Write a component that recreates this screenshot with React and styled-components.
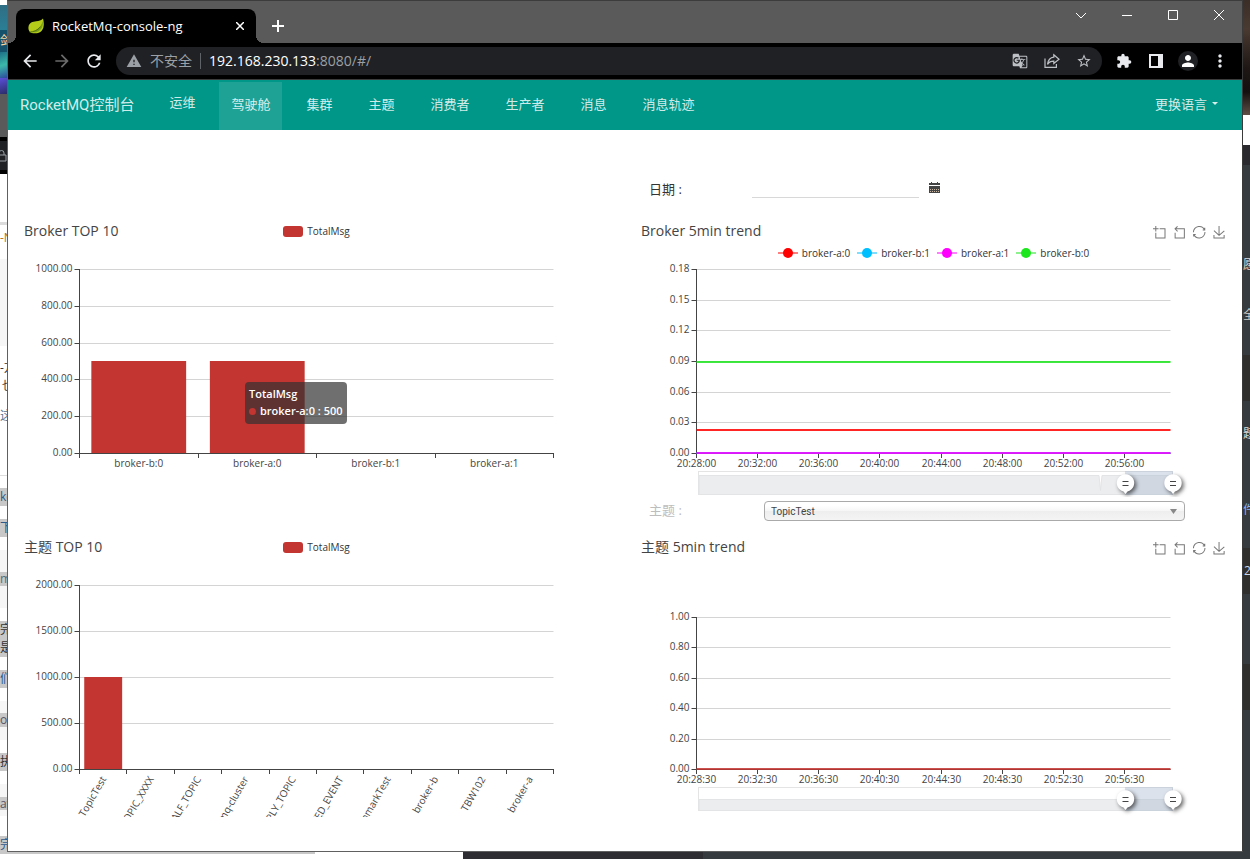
import React from 'react'
import styled, { createGlobalStyle } from 'styled-components'
import {
  MdArrowBack,
  MdArrowForward,
  MdRefresh,
  MdWarning,
  MdGTranslate,
  MdStarBorder,
  MdExtension,
  MdPerson,
  MdMoreVert,
} from 'react-icons/md'

const GlobalStyle = createGlobalStyle`
  * { box-sizing: border-box; }
  body {
    margin: 0;
    font-family: 'Open Sans', 'Noto Sans CJK SC', sans-serif;
    color: #333;
    background: #fff;
  }
  button, input, select { font-family: inherit; }
`

/* ---------- desktop ---------- */

const StDesktop = styled.div`
  display: grid;
  grid-template-columns: 7px minmax(0, 1fr) 7px;
  grid-template-rows: 1fr 7px;
  min-height: 100vh;
`
const StStrip = styled.div`
  display: flex;
  flex-direction: column;
  height: 0;
  min-height: 100%;
  overflow: hidden;
`
const StBand = styled.div`
  flex: 0 0 ${(p) => p.$h}px;
  display: flex;
  align-items: center;
  padding-left: ${(p) => p.$pad || 0}px;
  overflow: hidden;
  white-space: nowrap;
  font-size: 12px;
  line-height: 16px;
  color: ${(p) => p.$color || '#333'};
  background: ${(p) => p.$bg || '#fff'};
`
const StBottomStrip = styled.div`
  grid-column: 1 / -1;
  display: flex;
`
const StBottomPiece = styled.div`
  flex: ${(p) => p.$grow} 0 0;
  background: ${(p) => p.$bg};
  border-top: ${(p) => (p.$edge ? '2px solid #c8c8c8' : 'none')};
`
const StWindow = styled.div`
  display: flex;
  flex-direction: column;
  border: 1px solid #606060;
  border-top-color: #3c3c3c;
  border-right-color: #3a3a3a;
  background: #fff;
`

/* ---------- browser chrome ---------- */

const StTitleBar = styled.div`
  display: flex;
  align-items: flex-end;
  height: 42px;
  padding-left: 8px;
  background: #5a5a5a;
`
const StTab = styled.div`
  position: relative;
  display: flex;
  align-items: center;
  gap: 8px;
  width: 240px;
  height: 34px;
  padding: 0 8px 0 12px;
  border-radius: 8px 8px 0 0;
  background: #000;
  color: #fff;
  font-size: 13px;
  &::before,
  &::after {
    content: '';
    position: absolute;
    bottom: 0;
    width: 8px;
    height: 8px;
  }
  &::before {
    left: -8px;
    background: radial-gradient(circle at 0 0, transparent 8px, #000 8px);
  }
  &::after {
    right: -8px;
    background: radial-gradient(circle at 100% 0, transparent 8px, #000 8px);
  }
`
const StTabTitle = styled.span`
  flex: 1;
  white-space: nowrap;
`
const StIconButton = styled.button`
  display: flex;
  align-items: center;
  justify-content: center;
  flex: none;
  width: ${(p) => p.$size || 20}px;
  height: ${(p) => p.$size || 20}px;
  padding: 0;
  border: 0;
  border-radius: 50%;
  background: ${(p) => p.$bg || 'none'};
  color: ${(p) => p.$color || '#e8eaed'};
`
const StNewTab = styled(StIconButton)`
  margin: 0 0 7px 12px;
`
const StWindowButtons = styled.div`
  display: flex;
  align-self: flex-start;
  margin-left: auto;
`
const StWindowButton = styled.button`
  display: flex;
  align-items: center;
  justify-content: center;
  width: 46px;
  height: 28px;
  padding: 0;
  border: 0;
  background: none;
  color: #fff;
`
const StToolbar = styled.div`
  display: flex;
  align-items: center;
  gap: 12px;
  height: 37px;
  padding: 0 12px;
  background: #000;
  border-bottom: 1px solid #3c3c3c;
`
const StOmnibox = styled.div`
  flex: 1;
  display: flex;
  align-items: center;
  gap: 8px;
  height: 28px;
  padding: 0 10px;
  border-radius: 14px;
  background: #202124;
  color: #9aa0a6;
  font-size: 14px;
  line-height: 20px;
`
const StDivider = styled.span`
  width: 1px;
  height: 16px;
  background: #5f6368;
`
const StUrl = styled.span`
  flex: 1;
  white-space: nowrap;
  b {
    font-weight: 400;
    color: #fff;
  }
`
const StOmniboxActions = styled.div`
  display: flex;
  gap: 16px;
`

/* ---------- console page ---------- */

const StNavbar = styled.nav`
  display: flex;
  align-items: flex-end;
  height: 50px;
  padding: 0 12px;
  background: #009688;
  font-family: Roboto, 'Noto Sans CJK SC', sans-serif;
`
const StBrand = styled.a`
  margin-right: 23px;
  line-height: 50px;
  font-size: 15px;
  text-decoration: none;
  white-space: nowrap;
  color: rgba(255, 255, 255, 0.84);
`
const StNavItem = styled.a`
  height: 48px;
  margin-right: 12px;
  padding: 0 12px;
  line-height: ${(p) => (p.$raised ? 42 : 46)}px;
  font-size: 13px;
  text-decoration: none;
  white-space: nowrap;
  color: rgba(255, 255, 255, 0.84);
  background: ${(p) => (p.$active ? 'rgba(255, 255, 255, 0.12)' : 'none')};
`
const StLanguage = styled.button`
  display: flex;
  align-items: center;
  gap: 5px;
  height: 48px;
  margin-left: auto;
  padding: 0 12px 6px;
  border: 0;
  background: none;
  font-size: 13px;
  color: rgba(255, 255, 255, 0.84);
`
const StMain = styled.main`
  flex: 1;
  padding: 36px 0 34px;
`
const StRow = styled.section`
  display: grid;
  grid-template-columns: repeat(2, minmax(0, 1fr));
  min-height: ${(p) => p.$min || 0}px;
`
const StField = styled.div`
  grid-column: 2;
  display: flex;
  align-items: ${(p) => p.$align || 'center'};
  padding: ${(p) => p.$padding};
  font-size: 13px;
`
const StLabel = styled.label`
  flex: 0 0 ${(p) => p.$width}px;
  line-height: 18px;
  color: ${(p) => p.$color || '#333'};
`
const StDateInput = styled.input`
  width: 167px;
  height: 28px;
  margin-right: 4px;
  padding: 0;
  border: 0;
  border-bottom: 1px solid #d8d8d8;
  background: none;
`
const StSelectBox = styled.div`
  position: relative;
  flex: 1;
  svg {
    position: absolute;
    right: 8px;
    top: 8px;
    pointer-events: none;
  }
`
const StSelect = styled.select`
  display: block;
  width: 100%;
  height: 20px;
  padding: 0 6px;
  appearance: none;
  border: 1px solid #aaa;
  border-radius: 4px;
  background: linear-gradient(#fff 20%, #f6f6f6 50%, #eee 52%, #f4f4f4 100%);
  font-family: Roboto, sans-serif;
  font-size: 10px;
  color: #444;
`
const StChart = styled.figure`
  position: relative;
  margin: 0;
`
const StChartHead = styled.div`
  display: grid;
  grid-template-columns: 1fr auto 1fr;
  align-items: center;
  height: 30px;
  padding: 0 16px;
`
const StTitle = styled.h2`
  margin: 0;
  font-size: 14px;
  line-height: 20px;
  font-weight: 400;
  color: #444;
`
const StLegend = styled.div`
  grid-column: 2;
  display: flex;
  justify-content: center;
  gap: 7px;
  font-size: 10px;
  line-height: 14px;
`
const StLegendItem = styled.span`
  display: flex;
  align-items: center;
  gap: 4px;
`
const StSwatch = styled.span`
  width: 20px;
  height: 11px;
  border-radius: 3px;
  background: ${(p) => p.$color};
`
const StTools = styled.div`
  grid-column: 3;
  display: flex;
  justify-content: flex-end;
  gap: 8px;
  padding: 2px 1px 0 0;
`
const StToolButton = styled.button`
  width: 12px;
  height: 12px;
  padding: 0;
  border: 0;
  background: none;
  svg {
    display: block;
    overflow: visible;
  }
`
const StPlot = styled.svg`
  display: block;
  width: 100%;
  overflow: hidden;
  font-size: 10px;
  fill: #444;
`
const StTooltip = styled.div`
  position: absolute;
  left: 237px;
  top: 166px;
  padding: 3px 4px 5px;
  border-radius: 4px;
  background: rgba(50, 50, 50, 0.7);
  color: #fff;
  font-size: 11px;
  font-weight: 600;
  line-height: 17px;
  white-space: nowrap;
`
const StDot = styled.span`
  display: inline-block;
  width: 7px;
  height: 7px;
  margin-right: 4px;
  border-radius: 50%;
  background: #c23531;
`

/* ---------- data ---------- */

const LEFT_BANDS = [
  { h: 5 },
  { h: 25, bg: 'linear-gradient(#2f6d84, #2a7f95)' },
  { h: 22, bg: '#16516b', text: '剑', color: '#ffd9a0' },
  { h: 26, bg: 'linear-gradient(160deg, #1d6f86, #3bb8a8 50%, #2c4a9c)' },
  { h: 16, bg: 'linear-gradient(160deg, #5a4fd8, #2a2d66)' },
  { h: 43, bg: '#5a5a5a' },
  { h: 4, bg: '#000' },
  { h: 29, bg: '#202124', lock: true },
  { h: 4, bg: '#000' },
  { h: 48 },
  { h: 3, bg: '#dcdcdc' },
  { h: 3 },
  { h: 20, text: '-N', color: '#b8731a' },
  { h: 11 },
  { h: 87, bg: '#f6f6f6' },
  { h: 13 },
  { h: 18, text: '-方' },
  { h: 18, text: '也', pad: 2 },
  { h: 12 },
  { h: 18, text: '这个', color: '#5b7690' },
  { h: 50 },
  { h: 1, bg: '#ddd' },
  { h: 12 },
  { h: 18, bg: '#c8c8c8', text: 'ke', color: '#2d5a8c' },
  { h: 13 },
  { h: 18, bg: '#c8c8c8', text: '下', color: '#2d5a8c' },
  { h: 13 },
  { h: 22, bg: '#f6f6f6' },
  { h: 14, bg: '#c8c8c8', text: 'm', color: '#4d7080' },
  { h: 22, bg: '#f6f6f6' },
  { h: 13 },
  { h: 18, bg: '#c8c8c8', text: '完' },
  { h: 18, bg: '#c8c8c8', text: '是' },
  { h: 13 },
  { h: 18, bg: '#c8c8c8', text: '们', color: '#2d5a8c' },
  { h: 13 },
  { h: 12, bg: '#f6f6f6' },
  { h: 14, bg: '#c8c8c8', text: 'oc', color: '#556' },
  { h: 13, bg: '#f6f6f6' },
  { h: 13 },
  { h: 18, bg: '#c8c8c8', text: '执' },
  { h: 13 },
  { h: 13, bg: '#f6f6f6' },
  { h: 13, bg: '#c8c8c8', text: 'av', color: '#556' },
  { h: 6, bg: '#f6f6f6' },
  { h: 20 },
  { h: 18, bg: '#c8c8c8', text: '完', color: '#2d5a8c' },
]
const RIGHT_BANDS = [
  { h: 115, bg: 'linear-gradient(#3a2e28, #4a3a31 25%, #1d1614 60%, #14100f 80%, #5e4e45)' },
  { h: 30 },
  { h: 20, bg: '#2b2b2f' },
  { h: 90, bg: '#363b3f' },
  { h: 20, bg: '#363b3f', text: '愿', color: '#ddd' },
  { h: 30, bg: '#363b3f' },
  { h: 20, bg: '#363b3f', text: '全', color: '#ccc' },
  { h: 30, bg: '#363b3f' },
  { h: 46, bg: '#302f2e' },
  { h: 23, bg: '#363b3f' },
  { h: 20, bg: '#363b3f', text: '题', color: '#ddd' },
  { h: 56, bg: '#363b3f' },
  { h: 20, bg: '#363b3f', text: '件', color: '#8ab4f8' },
  { h: 28, bg: '#363b3f' },
  { h: 46, bg: '#302f2e', text: '2', color: '#c9d6ea', pad: 1 },
  { h: 70, bg: '#363b3f' },
  { h: 46, bg: '#302f2e' },
  { h: 200, bg: '#363b3f' },
]
const NAV_ITEMS = ['运维', '驾驶舱', '集群', '主题', '消费者', '生产者', '消息', '消息轨迹']

const BROKERS = [
  { name: 'broker-b:0', value: 500 },
  { name: 'broker-a:0', value: 500 },
  { name: 'broker-b:1', value: 0 },
  { name: 'broker-a:1', value: 0 },
]
const TOPICS = [
  { name: 'TopicTest', value: 1000 },
  { name: 'SCHEDULE_TOPIC_XXXX', value: 0 },
  { name: 'RMQ_SYS_TRANS_HALF_TOPIC', value: 0 },
  { name: 'rocketmq-cluster', value: 0 },
  { name: 'rocketmq-cluster_REPLY_TOPIC', value: 0 },
  { name: 'OFFSET_MOVED_EVENT', value: 0 },
  { name: 'BenchmarkTest', value: 0 },
  { name: 'broker-b', value: 0 },
  { name: 'TBW102', value: 0 },
  { name: 'broker-a', value: 0 },
]
const BROKER_SERIES = [
  { name: 'broker-a:0', color: '#ff0000', value: 0.0225 },
  { name: 'broker-b:1', color: '#00bfff', value: 0 },
  { name: 'broker-a:1', color: '#ff00ff', value: 0 },
  { name: 'broker-b:0', color: '#1ee61e', value: 0.089 },
]
const TOPIC_SERIES = [{ name: 'TopicTest', color: '#c23531', value: 0 }]
const MINUTES = ['28', '32', '36', '40', '44', '48', '52', '56']

const TOOLS = [
  { label: '区域缩放', d: 'M0,13.5h26.9 M13.5,26.9V0 M32.1,13.5H58V58H13.5 V32.1' },
  { label: '区域缩放还原', d: 'M22,1.4L9.9,13.5l12.3,12.3 M10.3,13.5H54.9v44.6 H10.3v-26' },
  {
    label: '还原',
    d: 'M47,18.9h9.8V8.7 M56.3,20.1 C52.1,9,40.5,0.6,26.8,2.1C12.6,3.7,1.6,16.2,2.1,30.6 M13,41.1H3.1v10.2 M3.7,39.9c4.2,11.1,15.8,19.5,29.5,18 c14.2-1.6,25.2-14.1,24.7-28.5',
  },
  { label: '保存为图片', d: 'M4.7,22.9L29.3,45.5L54.7,23.4M4.6,43.6L4.6,58L53.8,58L53.8,43.6M29.2,45.1L29.2,0' },
]

/* ---------- icons ---------- */

const LeafIcon = () => (
  <svg width="16" height="16" viewBox="0 0 16 16">
    <path d="M15 0.5c1.2 4.2 1.3 9-1.3 12.2-2.2 2.6-6.4 3.2-10 2.2C.9 14 .1 11.4.5 8.7 1.2 4.8 4.7 3.6 8.2 3.3 11 3 13.3 2.5 15 .5z" fill="#b5cc18" />
    <path d="M14.8 3c.5 4.6-.8 8.500-4.6 10.4-2.3 1.2-5 1.1-7.8.6 4.9-.6 9.9-3 12.4-11z" fill="#7a9f1a" />
    <path d="M1.6 14.2c3.8-.4 8-1.8 10.8-5.4" fill="none" stroke="#3f5f10" strokeWidth="0.8" />
  </svg>
)

const ShareIcon = () => (
  <svg width="16" height="16" viewBox="0 0 16 16" fill="none" stroke="currentColor" strokeWidth="1.2">
    <path d="M1 5.5V14.4H12.4V11" />
    <path d="M9.8 1.8L15 6.2L9.8 10.4V8.2C6.8 8.2 4.8 9.2 3.5 11.4C4 7.6 6 4.6 9.8 4.2Z" />
  </svg>
)

const CalendarIcon = () => (
  <svg width="11" height="11" viewBox="0 0 11 11">
    <path d="M0 1h2V0h1v1h5V0h1v1h2v2H0zM0 4h11v7H0z" fill="#444" />
    <path d="M1 7.5h9M1 9.5h9" stroke="#c9b8a8" strokeDasharray="1 1" />
  </svg>
)

/* ---------- charts ---------- */

const X0 = 71.5
const X1 = 545.5

const ValueAxis = ({ top, bottom, ticks }) => {
  const step = (bottom - top) / (ticks.length - 1)
  return (
    <g>
      {ticks.map((tick, i) => {
        const y = Math.round(top + i * step) + 0.5
        return (
          <g key={tick}>
            <path d={`M${X0} ${y}H${X1}`} stroke="#d4d4d4" />
            <path d={`M${X0 - 5} ${y}H${X0}`} stroke="#444" />
            <text x={X0 - 7} y={y + 2.5} textAnchor="end">{tick}</text>
          </g>
        )
      })}
      <path d={`M${X0} ${top}V${bottom + 1}`} stroke="#444" />
    </g>
  )
}

const BarPlot = ({ data, max, ticks, height, rotate }) => {
  const top = 23
  const bottom = 207
  const step = (X1 - X0) / data.length
  return (
    <StPlot viewBox={`0 0 617 ${height}`}>
      <ValueAxis top={top} bottom={bottom} ticks={ticks} />
      {data.map((item, i) => {
        const h = (item.value / max) * (bottom - top)
        const center = X0 + step * (i + 0.5)
        return (
          <g key={item.name}>
            <rect x={center - step * 0.4} y={bottom - h} width={step * 0.8} height={h} fill="#c23531" />
            {rotate ? (
              <text
                x={center}
                y={bottom + 8}
                dy="4"
                textAnchor="end"
                transform={`rotate(-60 ${center} ${bottom + 8})`}
              >
                {item.name}
              </text>
            ) : (
              <text x={center} y={bottom + 14} textAnchor="middle">{item.name}</text>
            )}
          </g>
        )
      })}
      <path d={`M${X0} ${bottom + 0.5}H${X1}`} stroke="#444" />
      {[...data, null].map((_, i) => {
        const x = Math.round(X0 + step * i - 0.5) + 0.5
        return <path key={x} d={`M${x} ${bottom}v5`} stroke="#444" />
      })}
    </StPlot>
  )
}

const StHandle = styled.path`
  fill: #fff;
  filter: drop-shadow(2px 2px 2px rgba(0, 0, 0, 0.6));
`

const Handle = ({ x, y }) => (
  <g>
    <StHandle d={`M${x} ${y + 11}l-2 -2.5a8.7 8.7 0 1 1 4 0z`} />
    <path d={`M${x - 3} ${y - 1.5}h6M${x - 3} ${y + 2.5}h6`} stroke="#444" />
  </g>
)

const ZoomSlider = ({ y, shadow }) => (
  <g>
    <rect x="73.5" y={y + 0.5} width="474" height="23" fill="#fff" stroke="#e4e4e4" />
    <path d={shadow} fill="#ebedef" stroke="#e2e4e6" />
    <rect x="500" y={y} width="48" height="24" fill="rgba(167,183,204,0.4)" />
    <Handle x={500.5} y={y + 12} />
    <Handle x={548} y={y + 12} />
  </g>
)

const LinePlot = ({ series, max, ticks, top, bottom, height, second, shadow }) => (
  <StPlot viewBox={`0 0 617 ${height}`}>
    <ValueAxis top={top} bottom={bottom} ticks={ticks} />
    <path d={`M${X0} ${bottom + 0.5}H${X1}`} stroke="#444" />
    {MINUTES.map((minute, i) => {
      const x = Math.round(X0 + (i * 4 * (X1 - X0)) / 31 - 0.5) + 0.5
      return (
        <g key={minute}>
          <path d={`M${x} ${bottom}v5`} stroke="#444" />
          <text x={x} y={bottom + 14} textAnchor="middle">{`20:${minute}:${second}`}</text>
        </g>
      )
    })}
    {series.map((s) => {
      const y = Math.round(bottom - (s.value / max) * (bottom - top))
      return <path key={s.name} d={`M${X0} ${y}H${X1}`} stroke={s.color} strokeWidth="2" opacity="0.85" />
    })}
    <ZoomSlider y={bottom + 18} shadow={shadow} />
  </StPlot>
)

const Toolbox = () => (
  <StTools>
    {TOOLS.map((tool) => (
      <StToolButton key={tool.label} aria-label={tool.label}>
        <svg width="12" height="12" viewBox="0 0 58 58" fill="none" stroke="#777">
          <path d={tool.d} vectorEffect="non-scaling-stroke" />
        </svg>
      </StToolButton>
    ))}
  </StTools>
)

const BarHead = ({ title }) => (
  <StChartHead>
    <StTitle>{title}</StTitle>
    <StLegend>
      <StLegendItem>
        <StSwatch $color="#c23531" />
        TotalMsg
      </StLegendItem>
    </StLegend>
  </StChartHead>
)

const LineHead = ({ title }) => (
  <StChartHead>
    <StTitle>{title}</StTitle>
    <Toolbox />
  </StChartHead>
)

const Bands = ({ items }) => (
  <StStrip aria-hidden="true">
    {items.map((b, i) => (
      <StBand key={i} $h={b.h} $bg={b.bg} $color={b.color} $pad={b.pad}>
        {b.text}
        {b.lock && (
          <svg width="7" height="12" viewBox="3 0 7 12">
            <path d="M0 5h9v6H0zM2 5V3a2.5 2.5 0 0 1 5 0v2" fill="none" stroke="#9aa0a6" />
          </svg>
        )}
      </StBand>
    ))}
  </StStrip>
)

const WINDOW_BUTTONS = [
  { label: '搜索标签页', d: 'M0 3l5 5l5 -5' },
  { label: '最小化', d: 'M0 5.5h10' },
  { label: '最大化', d: 'M.5 .5h9v9h-9z' },
  { label: '关闭', d: 'M0 0l10 10M10 0l-10 10' },
]

const Browser = () => (
  <>
    <StTitleBar>
      <StTab>
        <LeafIcon />
        <StTabTitle>RocketMq-console-ng</StTabTitle>
        <StIconButton $size={16} $color="#fff" aria-label="关闭标签页">
          <svg width="8" height="8" viewBox="0 0 8 8" stroke="currentColor" strokeWidth="1.5">
            <path d="M0 0l8 8M8 0l-8 8" />
          </svg>
        </StIconButton>
      </StTab>
      <StNewTab $color="#fff" aria-label="打开新的标签页">
        <svg width="12" height="12" viewBox="0 0 12 12" stroke="currentColor" strokeWidth="2">
          <path d="M6 0v12M0 6h12" />
        </svg>
      </StNewTab>
      <StWindowButtons>
        {WINDOW_BUTTONS.map((b) => (
          <StWindowButton key={b.label} aria-label={b.label}>
            <svg width="10" height="10" viewBox="0 0 10 10" fill="none" stroke="currentColor">
              <path d={b.d} />
            </svg>
          </StWindowButton>
        ))}
      </StWindowButtons>
    </StTitleBar>
    <StToolbar>
      <StIconButton aria-label="后退"><MdArrowBack size={20} /></StIconButton>
      <StIconButton $color="#6b6b6b" aria-label="前进"><MdArrowForward size={20} /></StIconButton>
      <StIconButton aria-label="刷新"><MdRefresh size={20} /></StIconButton>
      <StOmnibox>
        <MdWarning size={16} />
        <span>不安全</span>
        <StDivider />
        <StUrl><b>192.168.230.133</b>:8080/#/</StUrl>
        <StOmniboxActions>
          <StIconButton $size={16} $color="#bdc1c6" aria-label="翻译"><MdGTranslate size={16} /></StIconButton>
          <StIconButton $size={16} $color="#bdc1c6" aria-label="分享"><ShareIcon /></StIconButton>
          <StIconButton $size={16} $color="#bdc1c6" aria-label="收藏"><MdStarBorder size={18} /></StIconButton>
        </StOmniboxActions>
      </StOmnibox>
      <StIconButton aria-label="扩展程序"><MdExtension size={16} /></StIconButton>
      <StIconButton aria-label="侧边栏">
        <svg width="14" height="14" viewBox="0 0 14 14">
          <path d="M0 0h14v14H0zM2 2v10h7V2z" fill="currentColor" fillRule="evenodd" />
        </svg>
      </StIconButton>
      <StIconButton $bg="#202124" $color="#fff" aria-label="用户"><MdPerson size={18} /></StIconButton>
      <StIconButton aria-label="更多"><MdMoreVert size={20} /></StIconButton>
    </StToolbar>
  </>
)

const App = () => {
  return (
    <StDesktop>
      <GlobalStyle />
      <Bands items={LEFT_BANDS} />
      <StWindow>
        <Browser />
        <StNavbar>
          <StBrand href="#/">RocketMQ控制台</StBrand>
          {NAV_ITEMS.map((name, i) => (
            <StNavItem key={name} href="#/" $raised={i === 0} $active={i === 1}>{name}</StNavItem>
          ))}
          <StLanguage>
            更换语言
            <svg width="6" height="3" viewBox="0 0 6 3"><path d="M0 0h6l-3 3z" fill="currentColor" /></svg>
          </StLanguage>
        </StNavbar>

        <StMain>
          <StRow $min={50}>
            <StField $align="flex-end" $padding="0 24px 18px">
              <StLabel htmlFor="date" $width={103}>日期 :</StLabel>
              <StDateInput id="date" type="text" />
              <StIconButton aria-label="日历" $size={22}><CalendarIcon /></StIconButton>
            </StField>
          </StRow>

          <StRow>
            <StChart>
              <BarHead title="Broker TOP 10" />
              <BarPlot
                data={BROKERS}
                max={1000}
                ticks={['1000.00', '800.00', '600.00', '400.00', '200.00', '0.00']}
                height={251}
              />
              <StTooltip>
                TotalMsg
                <br />
                <StDot />
                broker-a:0 : 500
              </StTooltip>
            </StChart>
            <StChart>
              <LineHead title="Broker 5min trend" />
              <StLegend>
                {BROKER_SERIES.map((s) => (
                  <StLegendItem key={s.name}>
                    <svg width="20" height="10" viewBox="0 0 20 10">
                      <path d="M0 5h20" stroke={s.color} strokeWidth="2" opacity="0.5" />
                      <circle cx="10" cy="5" r="5" fill={s.color} />
                    </svg>
                    {s.name}
                  </StLegendItem>
                ))}
              </StLegend>
              <LinePlot
                series={BROKER_SERIES}
                max={0.18}
                ticks={['0.18', '0.15', '0.12', '0.09', '0.06', '0.03', '0.00']}
                top={9}
                bottom={193}
                height={237}
                second="00"
                shadow="M74 215.5H474l1.5 15l1.5 -15H547V234.5H74z"
              />
            </StChart>
          </StRow>

          <StRow $min={35}>
            <StField $align="flex-start" $padding="4px 57px 0 24px">
              <StLabel htmlFor="topic" $width={115} $color="#bdbdbd">主题 :</StLabel>
              <StSelectBox>
                <StSelect id="topic" defaultValue="TopicTest">
                  <option>TopicTest</option>
                </StSelect>
                <svg width="7" height="5" viewBox="0 0 7 5"><path d="M0 0h7l-3.5 5z" fill="#888" /></svg>
              </StSelectBox>
            </StField>
          </StRow>

          <StRow>
            <StChart>
              <BarHead title="主题 TOP 10" />
              <BarPlot
                data={TOPICS}
                max={2000}
                ticks={['2000.00', '1500.00', '1000.00', '500.00', '0.00']}
                height={255}
                rotate
              />
            </StChart>
            <StChart>
              <LineHead title="主题 5min trend" />
              <LinePlot
                series={TOPIC_SERIES}
                max={1}
                ticks={['1.00', '0.80', '0.60', '0.40', '0.20', '0.00']}
                top={55}
                bottom={207}
                height={255}
                second="30"
                shadow="M74 237.5H547V248.5H74z"
              />
            </StChart>
          </StRow>
        </StMain>
      </StWindow>
      <Bands items={RIGHT_BANDS} />
      <StBottomStrip>
        <StBottomPiece $grow={315} $bg="#fff" $edge />
        <StBottomPiece $grow={148} $bg="#fff" />
        <StBottomPiece $grow={240} $bg="#2e2d32" />
        <StBottomPiece $grow={547} $bg="#363b3f" />
      </StBottomStrip>
    </StDesktop>
  )
}

export default App
